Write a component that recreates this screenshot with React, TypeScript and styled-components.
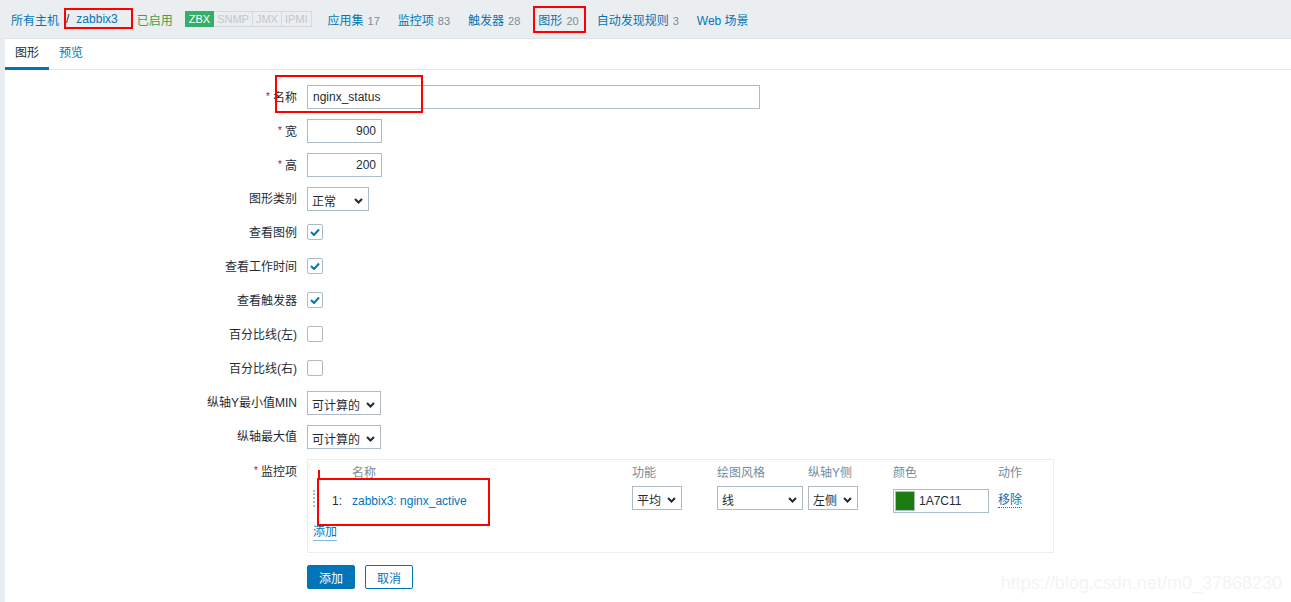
import { Fragment } from 'react'
import styled, { createGlobalStyle } from 'styled-components'

const GlobalStyle = createGlobalStyle`
  body {
    margin: 0;
    background: #ebeef0;
    font-family: "Liberation Sans", Arial, "Noto Sans CJK SC", sans-serif;
    font-size: 12px;
    color: #1f2c33;
  }
`

const Page = styled.div`
  position: relative;
  width: 1291px;
  height: 602px;
  display: flex;
  flex-direction: column;
  overflow: hidden;
`

const TopBar = styled.div`
  height: 38px;
  border-bottom: 1px solid #dfe4e7;
  display: flex;
  align-items: center;
  padding-left: 11px;
`

const Crumbs = styled.div`
  display: flex;
  align-items: center;
  gap: 7px;
`

const Link = styled.span`
  color: #0275b8;
  cursor: pointer;
`

const Status = styled.span`
  color: #429e47;
  margin-left: 19px;
`

const Tags = styled.div`
  display: flex;
  margin-left: 12px;
`

const Tag = styled.span<{ $on?: boolean }>`
  height: 14px;
  line-height: 14px;
  padding: 0 3px;
  font-size: 11px;
  border: 1px solid ${(p) => (p.$on ? '#34af67' : '#d4dadd')};
  background: ${(p) => (p.$on ? '#34af67' : '#ebeef0')};
  color: ${(p) => (p.$on ? '#fff' : '#bfc8cc')};
  & + & {
    border-left: none;
  }
`

const Nav = styled.div`
  display: flex;
  align-items: center;
  gap: 18px;
  margin-left: 16px;
`

const NavItem = styled.span`
  color: #0275b8;
  display: flex;
  align-items: baseline;
  gap: 4px;
`

const Count = styled.span`
  color: #768d99;
  font-size: 11px;
`

const Panel = styled.div`
  flex: 1;
  margin-left: 5px;
  background: #fff;
`

const TabList = styled.div`
  display: flex;
  height: 30px;
  border-bottom: 1px solid #e6eaec;
`

const Tab = styled.div<{ $active?: boolean }>`
  padding: 0 10px;
  line-height: 28px;
  height: 31px;
  box-sizing: border-box;
  color: ${(p) => (p.$active ? '#1f2c33' : '#0275b8')};
  border-bottom: 3px solid ${(p) => (p.$active ? '#0275b8' : 'transparent')};
`

const Form = styled.div`
  display: grid;
  grid-template-columns: 292px 1fr;
  column-gap: 10px;
  row-gap: 10px;
  padding-top: 15px;
`

const Label = styled.div`
  text-align: right;
  line-height: 24px;
  height: 24px;
  white-space: nowrap;
`

const Star = styled.span`
  color: #d40000;
  font-size: 10px;
  margin-right: 3px;
  vertical-align: 2px;
`

const Field = styled.div`
  display: flex;
  align-items: center;
  min-height: 24px;
`

const TextInput = styled.div<{ $w: number; $right?: boolean }>`
  width: ${(p) => p.$w}px;
  height: 24px;
  box-sizing: border-box;
  border: 1px solid #acbbc4;
  padding: 0 5px;
  line-height: 22px;
  text-align: ${(p) => (p.$right ? 'right' : 'left')};
`

const Select = styled.div<{ $w: number }>`
  width: ${(p) => p.$w}px;
  height: 24px;
  box-sizing: border-box;
  border: 1px solid #acbbc4;
  background: #fff;
  display: flex;
  align-items: center;
  justify-content: space-between;
  padding: 3px 5px 0 4px;
  font-size: 12px;
`

const Check = styled.div`
  width: 16px;
  height: 16px;
  box-sizing: border-box;
  border: 1px solid #acbbc4;
  border-radius: 2px;
  display: flex;
  align-items: center;
  justify-content: center;
  margin-top: -2px;
`

const ItemsBox = styled.div`
  width: 747px;
  box-sizing: border-box;
  border: 1px solid #ebeef0;
  padding: 5px 0 11px 5px;
`

const ItemsGrid = styled.div`
  display: grid;
  grid-template-columns: 19px 20px 280px 85px 91px 85px 105px auto;
  row-gap: 5px;
  align-items: start;
`

const Head = styled.div`
  color: #768d99;
  line-height: 16px;
`

const Cell = styled.div<{ $pt?: number }>`
  padding-top: ${(p) => p.$pt ?? 0}px;
  line-height: 16px;
`

const Handle = styled.div`
  width: 0;
  height: 17px;
  border-left: 2px dotted #acbbc4;
  margin-top: 4px;
`

const ColorInput = styled.div`
  width: 96px;
  height: 24px;
  box-sizing: border-box;
  border: 1px solid #acbbc4;
  display: flex;
  align-items: center;
  gap: 4px;
  padding-left: 1px;
  margin-top: 3px;
`

const Swatch = styled.span`
  width: 20px;
  height: 20px;
  box-sizing: border-box;
  border: 1px solid #acbbc4;
  background: #1a7c11;
`

const Dotted = styled.span`
  color: #0275b8;
  border-bottom: 1px dotted #0275b8;
`

const AddLink = styled.span`
  display: inline-block;
  margin-top: 12px;
  color: #0275b8;
  border-bottom: 1px solid #7fb9dc;
  line-height: 15px;
`

const Buttons = styled.div`
  display: flex;
  gap: 10px;
  margin-top: 12px;
`

const Button = styled.button<{ $primary?: boolean }>`
  width: 48px;
  height: 24px;
  border-radius: 2px;
  font: inherit;
  font-size: 12px;
  padding: 0;
  border: 1px solid #0275b8;
  background: ${(p) => (p.$primary ? '#0275b8' : '#fff')};
  color: ${(p) => (p.$primary ? '#fff' : '#0275b8')};
`

const Mark = styled.div`
  position: absolute;
  border: 2px solid #f00;
  box-sizing: border-box;
  pointer-events: none;
`

const Watermark = styled.div`
  position: absolute;
  right: 9px;
  bottom: 8px;
  font-size: 18px;
  color: #f4f4f4;
`

const Chevron = () => (
  <svg width="9" height="6" viewBox="0 0 9 6">
    <path d="M1 1l3.5 3.5L8 1" fill="none" stroke="#1f2c33" strokeWidth="2" />
  </svg>
)

const Tick = () => (
  <svg width="10" height="8" viewBox="0 0 10 8">
    <path d="M1 4l3 3 5-5.5" fill="none" stroke="#0275b8" strokeWidth="2" />
  </svg>
)

const nav = [
  { name: '应用集', count: '17' },
  { name: '监控项', count: '83' },
  { name: '触发器', count: '28' },
  { name: '图形', count: '20' },
  { name: '自动发现规则', count: '3' },
  { name: 'Web 场景', count: '' },
]

const checks = [
  { label: '查看图例', on: true },
  { label: '查看工作时间', on: true },
  { label: '查看触发器', on: true },
  { label: '百分比线(左)', on: false },
  { label: '百分比线(右)', on: false },
]

const App = () => {
  return (
    <Page>
      <GlobalStyle />
      <TopBar>
        <Crumbs>
          <Link>所有主机</Link>
          <span>/</span>
          <Link>zabbix3</Link>
        </Crumbs>
        <Status>已启用</Status>
        <Tags>
          <Tag $on>ZBX</Tag>
          <Tag>SNMP</Tag>
          <Tag>JMX</Tag>
          <Tag>IPMI</Tag>
        </Tags>
        <Nav>
          {nav.map((n) => (
            <NavItem key={n.name}>
              {n.name}
              {n.count && <Count>{n.count}</Count>}
            </NavItem>
          ))}
        </Nav>
      </TopBar>
      <Panel>
        <TabList>
          <Tab $active>图形</Tab>
          <Tab>预览</Tab>
        </TabList>
        <Form>
          <Label>
            <Star>*</Star>名称
          </Label>
          <Field>
            <TextInput $w={453}>nginx_status</TextInput>
          </Field>
          <Label>
            <Star>*</Star>宽
          </Label>
          <Field>
            <TextInput $w={75} $right>
              900
            </TextInput>
          </Field>
          <Label>
            <Star>*</Star>高
          </Label>
          <Field>
            <TextInput $w={75} $right>
              200
            </TextInput>
          </Field>
          <Label>图形类别</Label>
          <Field>
            <Select $w={62}>
              正常
              <Chevron />
            </Select>
          </Field>
          {checks.map((c) => (
            <Fragment key={c.label}>
              <Label>{c.label}</Label>
              <Field>
                <Check>{c.on && <Tick />}</Check>
              </Field>
            </Fragment>
          ))}
          <Label>纵轴Y最小值MIN</Label>
          <Field>
            <Select $w={74}>
              可计算的
              <Chevron />
            </Select>
          </Field>
          <Label>纵轴最大值</Label>
          <Field>
            <Select $w={74}>
              可计算的
              <Chevron />
            </Select>
          </Field>
          <Label>
            <Star>*</Star>监控项
          </Label>
          <div>
            <ItemsBox>
              <ItemsGrid>
                <Head />
                <Head />
                <Head>名称</Head>
                <Head>功能</Head>
                <Head>绘图风格</Head>
                <Head>纵轴Y侧</Head>
                <Head>颜色</Head>
                <Head>动作</Head>

                <Handle />
                <Cell $pt={7}>1:</Cell>
                <Cell $pt={7}>
                  <Link>zabbix3: nginx_active</Link>
                </Cell>
                <Select $w={50}>
                  平均
                  <Chevron />
                </Select>
                <Select $w={86}>
                  线
                  <Chevron />
                </Select>
                <Select $w={50}>
                  左侧
                  <Chevron />
                </Select>
                <ColorInput>
                  <Swatch />
                  1A7C11
                </ColorInput>
                <Cell $pt={6}>
                  <Dotted>移除</Dotted>
                </Cell>
              </ItemsGrid>
              <AddLink>添加</AddLink>
            </ItemsBox>
            <Buttons>
              <Button $primary>添加</Button>
              <Button>取消</Button>
            </Buttons>
          </div>
        </Form>
      </Panel>

      <Mark style={{ left: 64, top: 8, width: 69, height: 21 }} />
      <Mark style={{ left: 533, top: 6, width: 53, height: 27 }} />
      <Mark style={{ left: 275, top: 75, width: 148, height: 38 }} />
      <Mark style={{ left: 317, top: 478, width: 173, height: 48 }} />
      <Mark style={{ left: 318, top: 470, width: 2, height: 9, borderWidth: '0 0 0 2px' }} />
      <Watermark>https://blog.csdn.net/m0_37868230</Watermark>
    </Page>
  )
}

export default App
